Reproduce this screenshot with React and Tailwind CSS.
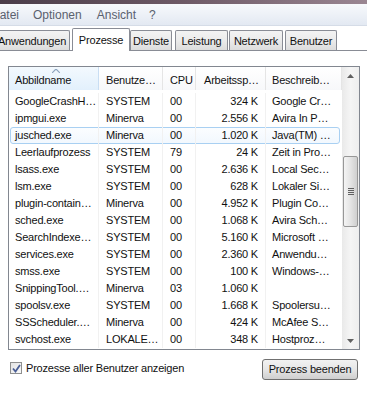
import React from "react";

const rows = [
  ["GoogleCrashH…", "SYSTEM", "00", "324 K", "Google Cr…"],
  ["ipmgui.exe", "Minerva", "00", "2.556 K", "Avira In P…"],
  ["jusched.exe", "Minerva", "00", "1.020 K", "Java(TM) …"],
  ["Leerlaufprozess", "SYSTEM", "79", "24 K", "Zeit in Pro…"],
  ["lsass.exe", "SYSTEM", "00", "2.636 K", "Local Sec…"],
  ["lsm.exe", "SYSTEM", "00", "628 K", "Lokaler Si…"],
  ["plugin-contain…", "Minerva", "00", "4.952 K", "Plugin Co…"],
  ["sched.exe", "SYSTEM", "00", "1.068 K", "Avira Sch…"],
  ["SearchIndexe…", "SYSTEM", "00", "5.160 K", "Microsoft …"],
  ["services.exe", "SYSTEM", "00", "2.360 K", "Anwendu…"],
  ["smss.exe", "SYSTEM", "00", "100 K", "Windows-…"],
  ["SnippingTool.…", "Minerva", "03", "1.060 K", ""],
  ["spoolsv.exe", "SYSTEM", "00", "1.668 K", "Spoolersu…"],
  ["SSScheduler.…", "Minerva", "00", "424 K", "McAfee S…"],
  ["svchost.exe", "LOKALE…", "00", "348 K", "Hostproz…"],
];

const tabs = [
  { name: "Anwendungen", cls: "w-[76px] ml-0" },
  { name: "Prozesse", cls: "w-[58px] ml-[2px]", active: true },
  { name: "Dienste", cls: "w-[42px] ml-0" },
  { name: "Leistung", cls: "w-[53px] ml-[3px]" },
  { name: "Netzwerk", cls: "w-[54px] ml-[1px]" },
  { name: "Benutzer", cls: "w-[52px] ml-[2px]" },
];

function Tab({ name, cls, active }) {
  if (active) {
    return (
      <div className={`${cls} relative z-10 -mb-px h-[23px] flex items-center justify-center bg-white border border-b-0 border-[#898c95] rounded-t-[2px]`}>
        {name}
      </div>
    );
  }
  return (
    <div className={`${cls} h-[20px] pt-[1px] flex items-center justify-center bg-gradient-to-b from-[#f3f3f3] via-[#ebebeb] to-[#dcdcdc] border border-b-0 border-[#898c95] rounded-t-[2px]`}>
      {name}
    </div>
  );
}

function Row({ r, focused }) {
  return (
    <div className="relative flex h-[17px] items-center">
      {focused && (
        <div className="absolute top-0 bottom-0 left-[1px] right-[2px] rounded-[3px] border border-[#a9d0f2] bg-gradient-to-b from-[#fbfdff] to-[#f2f8fe]" />
      )}
      <div className="relative w-[90px] pl-[6px] whitespace-nowrap border-r border-[#f1f1f1]">{r[0]}</div>
      <div className="relative w-[64px] pl-[7px] whitespace-nowrap border-r border-[#f1f1f1]">{r[1]}</div>
      <div className="relative w-[33px] pl-[7px] whitespace-nowrap border-r border-[#f1f1f1]">{r[2]}</div>
      <div className="relative w-[70px] pr-[7px] text-right whitespace-nowrap border-r border-[#f1f1f1]">{r[3]}</div>
      <div className="relative w-[76px] pl-[6px] whitespace-nowrap">{r[4]}</div>
    </div>
  );
}

function ScrollArrow({ up }) {
  return (
    <div className="h-[17px] flex items-center justify-center">
      <svg width="7" height="4" viewBox="0 0 7 4">
        {up ? (
          <path d="M0 4 L3.5 0 L7 4 Z" fill="#606060" />
        ) : (
          <path d="M0 0 L3.5 4 L7 0 Z" fill="#606060" />
        )}
      </svg>
    </div>
  );
}

export default function App() {
  return (
    <div className="w-[367px] h-[395px] overflow-hidden bg-white font-['Liberation_Sans',Arial,sans-serif] text-[11px] tracking-[-0.2px] text-[#111]">
      <div className="h-[4px] bg-gradient-to-r from-[#4b3d49] via-[#6e5a66] to-[#9a8692]" />
      <div className="h-[22px] flex items-center text-[12px] tracking-normal text-[#5a616e] bg-gradient-to-b from-[#f7f9fc] to-[#e3e9f2] border-b border-[#d5dce7]">
        <span className="-ml-[9px]">Datei</span>
        <span className="ml-[14px]">Optionen</span>
        <span className="ml-[15px]">Ansicht</span>
        <span className="ml-[13px]">?</span>
      </div>

      <div className="mt-[3px] h-[22px] flex items-end border-b border-[#898c95] -ml-[6px] w-[373px]">
        {tabs.map((t) => (
          <Tab key={t.name} {...t} />
        ))}
      </div>

      <div className="mt-[15px] ml-[8px] w-[352px] h-[284px] border border-[#828790] flex">
        <div className="w-[333px] flex flex-col">
          <div className="h-[23px] flex bg-gradient-to-b from-white to-[#f7f8fa]">
            <div className="relative w-[90px] pl-[6px] pt-[3px] flex items-center border-r border-[#c9def3] bg-gradient-to-b from-[#f3f9fe] to-[#e2f0fc]">
              <svg className="absolute top-[2px] left-[43px]" width="8" height="4" viewBox="0 0 8 4">
                <path d="M0 4 L4 0 L8 4" fill="none" stroke="#8ea5bf" strokeWidth="1.2" />
              </svg>
              Abbildname
            </div>
            <div className="w-[64px] pl-[7px] pt-[3px] flex items-center border-r border-[#e5e5e5] whitespace-nowrap">Benutze…</div>
            <div className="w-[33px] pl-[7px] pt-[3px] flex items-center border-r border-[#e5e5e5]">CPU</div>
            <div className="w-[70px] pl-[8px] pt-[3px] flex items-center border-r border-[#e5e5e5] whitespace-nowrap">Arbeitssp…</div>
            <div className="w-[76px] pl-[6px] pt-[3px] flex items-center border-r border-[#e5e5e5] whitespace-nowrap">Beschreib…</div>
          </div>
          <div className="pt-[3px]">
            {rows.map((r, i) => (
              <Row key={r[0]} r={r} focused={i === 2} />
            ))}
          </div>
        </div>

        <div className="w-[17px] flex flex-col bg-gradient-to-r from-[#e9e9e9] via-[#f5f5f5] to-[#eeeeee]">
          <ScrollArrow up />
          <div className="h-[72px]" />
          <div className="mx-[1px] h-[71px] rounded-[2px] border border-[#979797] bg-gradient-to-r from-[#f4f4f4] via-[#e4e4e4] to-[#cfcfcf] flex items-center justify-center">
            <div className="flex flex-col gap-[1px]">
              <div className="w-[6px] h-[1px] bg-[#606060]" />
              <div className="w-[6px] h-[1px] bg-[#606060]" />
              <div className="w-[6px] h-[1px] bg-[#606060]" />
              <div className="w-[6px] h-[1px] bg-[#606060]" />
            </div>
          </div>
          <div className="flex-1" />
          <ScrollArrow />
        </div>
      </div>

      <div className="mt-[9px] flex items-start">
        <div className="ml-[10px] mt-[1px] flex items-center">
          <div className="w-[12px] h-[12px] border border-[#8e8f8f] bg-gradient-to-br from-[#e4e4e4] to-[#f9f9f9] flex items-center justify-center">
            <svg width="9" height="9" viewBox="0 0 9 9">
              <path d="M1 4.5 L3.5 7.5 L8 1" fill="none" stroke="#4a5e96" strokeWidth="1.8" />
            </svg>
          </div>
          <span className="ml-[4px]">Prozesse aller Benutzer anzeigen</span>
        </div>
        <div className="ml-auto mr-[9px] w-[96px] h-[21px] rounded-[3px] border border-[#707070] bg-gradient-to-b from-[#f2f2f2] via-[#e6e6e6] to-[#cfcfcf] flex items-center justify-center">
          Prozess beenden
        </div>
      </div>
    </div>
  );
}
